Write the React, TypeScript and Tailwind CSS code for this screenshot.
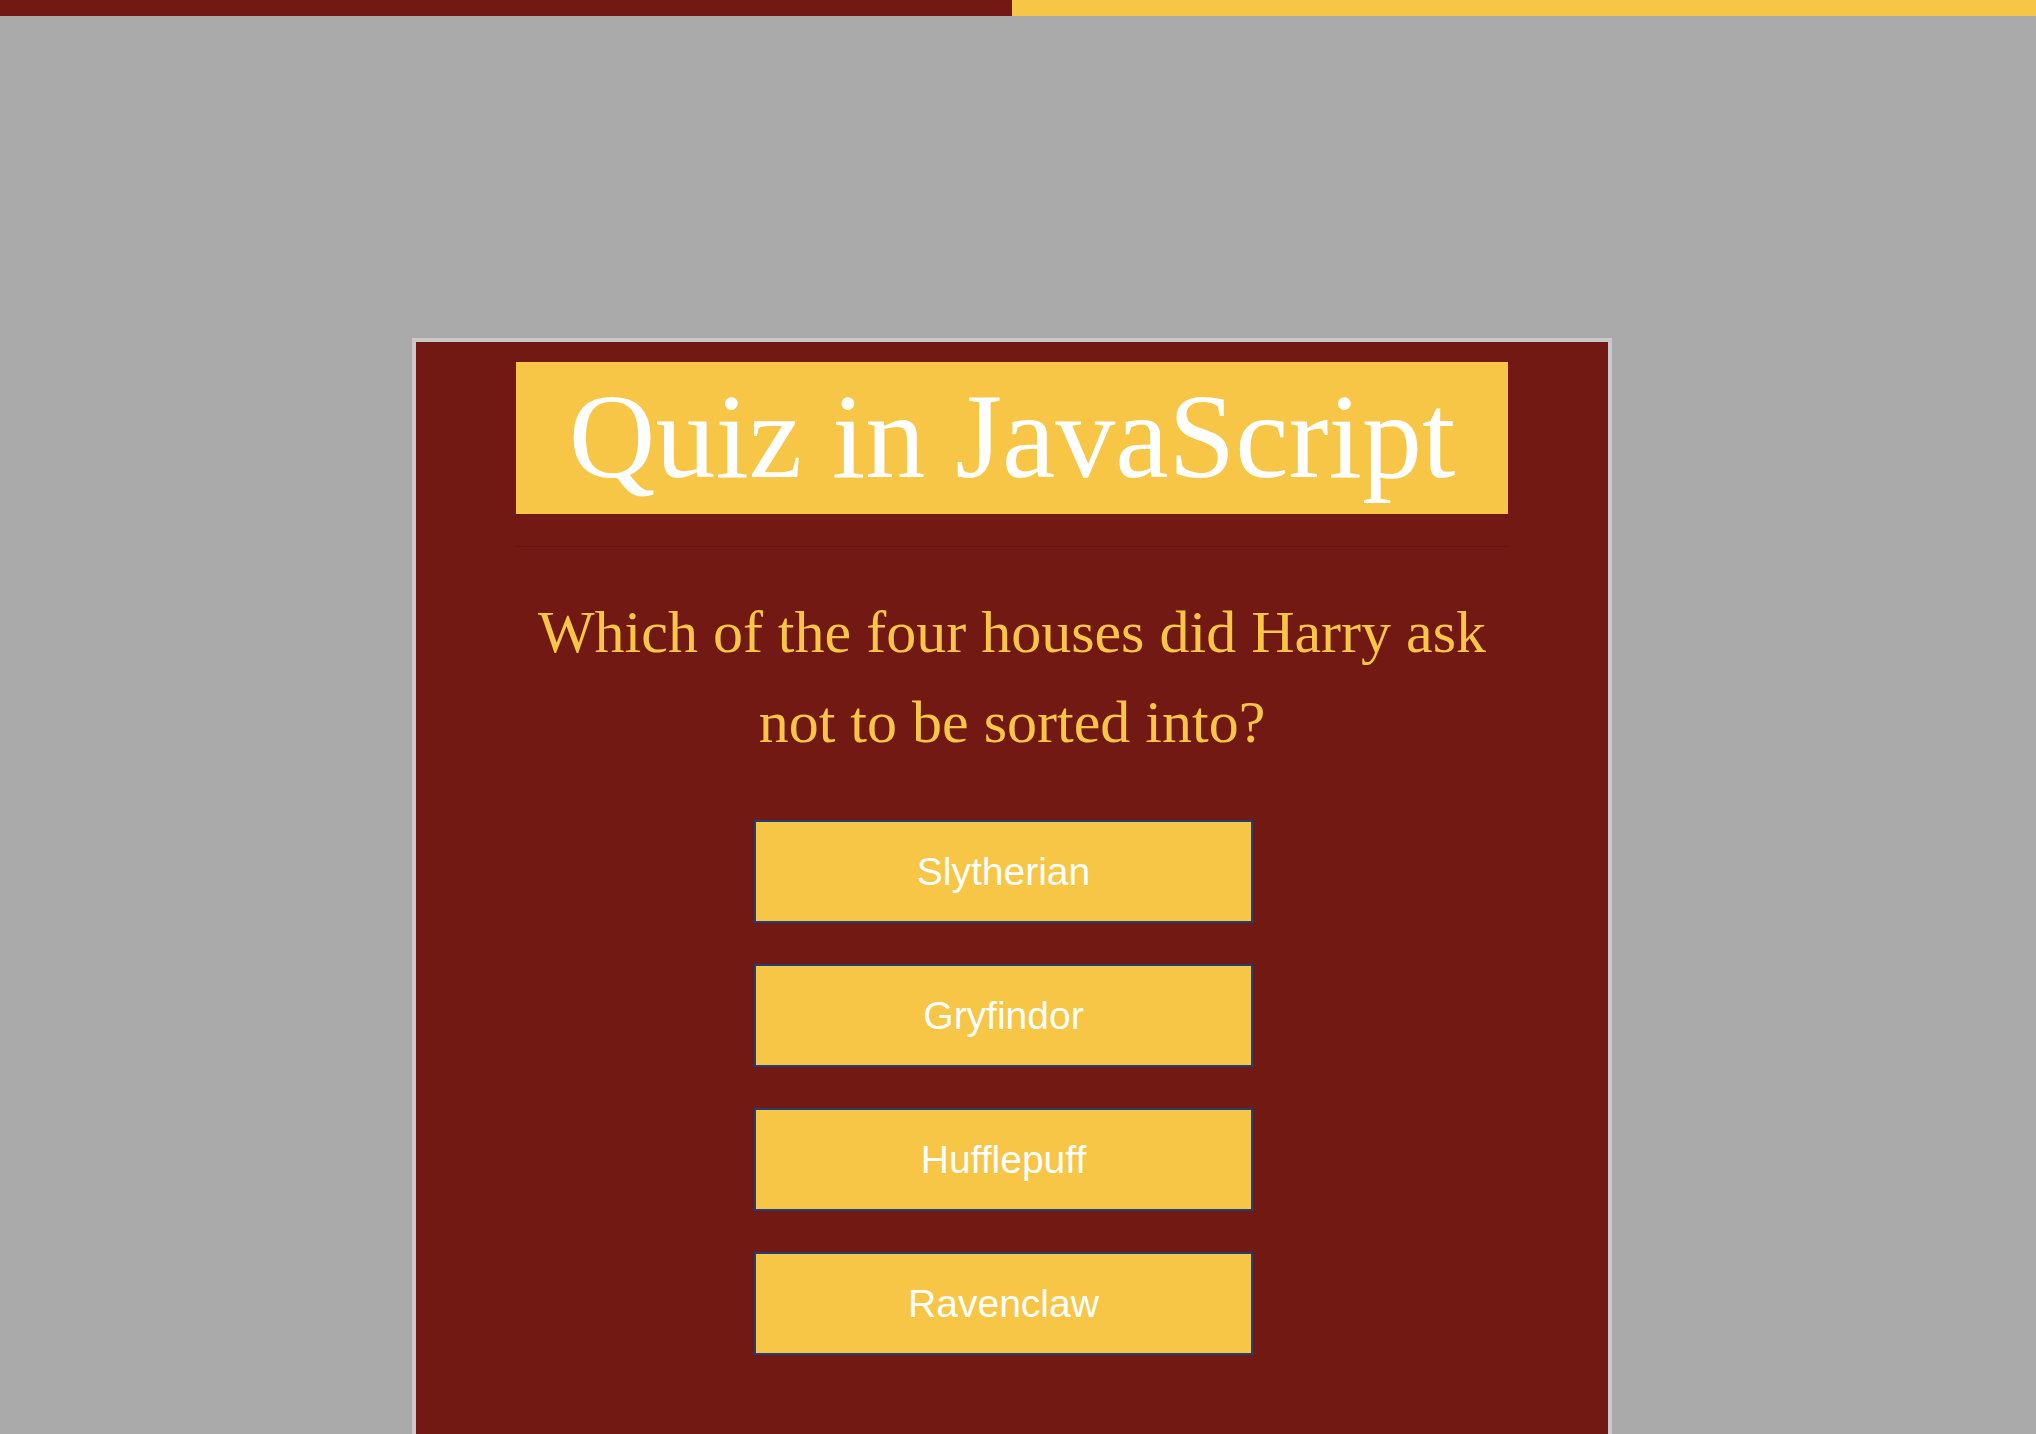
const answers = ["Slytherian", "Gryfindor", "Hufflepuff", "Ravenclaw"];

export default function App() {
  return (
    <div className="min-h-screen bg-[#aaaaaa] font-['Liberation_Serif',serif]">
      {/* progress bar */}
      <div className="flex h-[16px] w-full bg-[#f7c646]">
        <div className="h-full w-[1012px] bg-[#731914]" />
      </div>

      <div className="ml-[412px] mt-[322px] w-[1200px] border-4 border-[#c9c9c9] bg-[#731914] px-[100px] pb-[120px] pt-[20px]">
        <h1 className="h-[152px] bg-[#f7c646] pt-[6px] text-center text-[120px] leading-[138px] text-white">
          Quiz in JavaScript
        </h1>

        <hr className="mt-[32px] border-t border-[#631510]" />

        <p className="mt-[40px] text-center text-[60px] leading-[90px] text-[#f7c646]">
          Which of the four houses did Harry ask not to be sorted into?
        </p>

        <div className="mt-[53px] flex flex-col items-start gap-[41px]">
          {answers.map((a) => (
            <button
              key={a}
              type="button"
              className="ml-[238px] h-[103px] w-[499px] border-2 border-[#233f72] bg-[#f7c646] pt-[2px] font-['Liberation_Sans',sans-serif] text-[39px] text-white"
            >
              {a}
            </button>
          ))}
        </div>
      </div>
    </div>
  );
}
